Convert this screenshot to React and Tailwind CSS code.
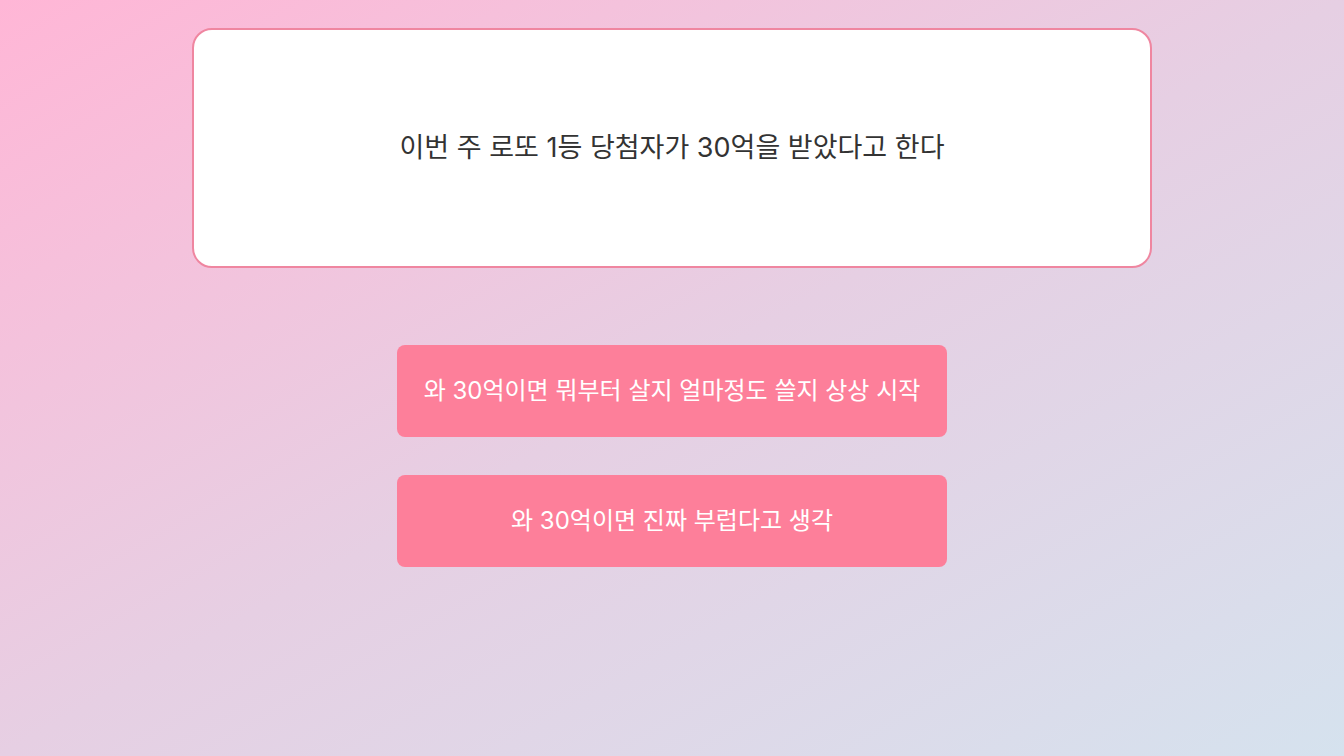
export default function App() {
  const choices = [
    "와 30억이면 뭐부터 살지 얼마정도 쓸지 상상 시작",
    "와 30억이면 진짜 부럽다고 생각",
  ];

  return (
    <div
      className="min-h-screen w-full bg-gradient-to-br from-[#ffb6d6] via-[#e6cfe3] to-[#d5e2ee] flex flex-col items-center pt-7"
      style={{ fontFamily: 'Inter, "Noto Sans CJK KR", sans-serif' }}
    >
      <div className="w-[960px] h-[240px] bg-white border-2 border-[#ef86a0] rounded-[20px] flex items-center justify-center">
        <p className="text-[27px] text-[#333333]">
          이번 주 로또 1등 당첨자가 30억을 받았다고 한다
        </p>
      </div>

      <div className="mt-[77px] flex flex-col gap-[38px]">
        {choices.map((c) => (
          <button
            key={c}
            className="w-[550px] h-[92px] rounded-lg bg-[#fd7f9a] text-white text-[24px] flex items-center justify-center"
          >
            {c}
          </button>
        ))}
      </div>
    </div>
  );
}
